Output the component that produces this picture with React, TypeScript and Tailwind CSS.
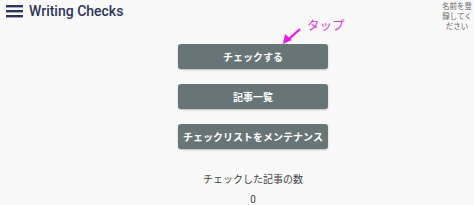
import React from "react";

export default function App() {
  const btn =
    "w-[150px] h-[25px] rounded-[3px] bg-[#687577] text-white text-[10px] font-bold flex items-center justify-center shadow-[0_1px_2px_rgba(0,0,0,0.25)]";
  return (
    <div className="w-[474px] h-[205px] bg-[#f9f9f9] overflow-hidden font-['Noto_Sans_CJK_JP',sans-serif]">
      <div className="flex items-start justify-between h-[40px]">
        <div className="flex items-center gap-[6px] pl-[6px] pt-[4px]">
          <svg width="17" height="14" viewBox="0 0 17 14">
            <rect x="0" y="1" width="17" height="2.4" fill="#2e3559" />
            <rect x="0" y="6" width="17" height="2.4" fill="#2e3559" />
            <rect x="0" y="11" width="17" height="2.4" fill="#2e3559" />
          </svg>
          <span className="text-[14px] font-medium text-[#2e3559] font-['Roboto',sans-serif] leading-none">
            Writing Checks
          </span>
        </div>
        <div className="w-[30px] mr-[2px] pt-[1px] text-[7.5px] leading-[10px] text-[#666] text-center">
          名前を登録してください
        </div>
      </div>
      <div className="pl-[32px] flex flex-col items-center">
        <div className="relative mt-[4px]">
          <div className={btn}>チェックする</div>
          <div className="absolute left-[129px] top-[-25px] text-[12.5px] text-[#e433e4] leading-none whitespace-nowrap">
            タップ
          </div>
          <svg className="absolute left-[102px] top-[-24px]" width="24" height="26" viewBox="0 0 24 26">
            <line x1="20" y1="9" x2="9" y2="19" stroke="#e619e6" strokeWidth="2.2" />
            <polygon points="3,24 5,14 12,20" fill="#e619e6" />
          </svg>
        </div>
        <div className={btn + " mt-[15px]"}>記事一覧</div>
        <div className={btn + " mt-[15px]"}>チェックリストをメンテナンス</div>
        <div className="mt-[22px] text-[10px] text-[#444]">チェックした記事の数</div>
        <div className="mt-[6px] text-[10px] text-[#444] font-['Roboto',sans-serif]">0</div>
      </div>
    </div>
  );
}
